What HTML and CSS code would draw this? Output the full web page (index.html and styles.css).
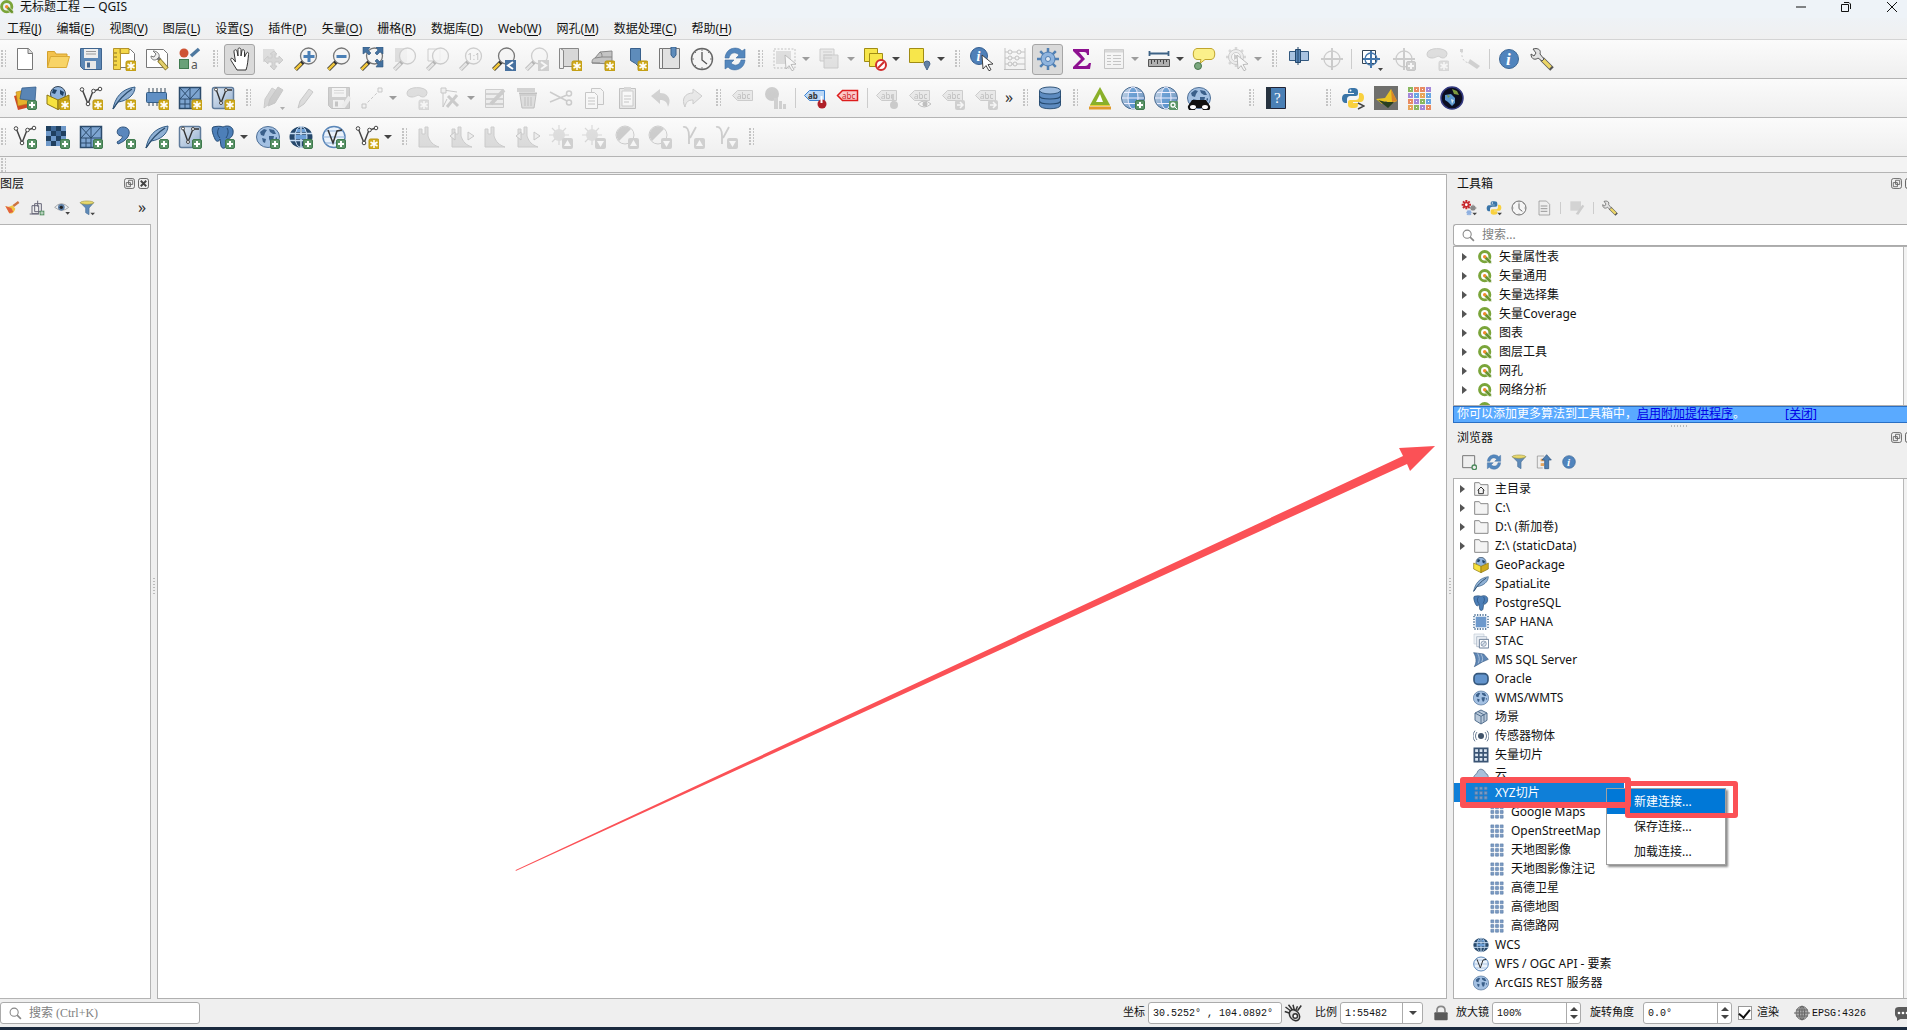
FILE: index.html
```html
<!DOCTYPE html>
<html lang="zh-CN">
<head>
<meta charset="utf-8">
<title>无标题工程 — QGIS</title>
<link rel="stylesheet" href="styles.css">
</head>
<body>
<svg class="defs" aria-hidden="true">
<defs>
<linearGradient id="gb" x1="0" y1="0" x2="1" y2="1"><stop offset="0" stop-color="#cfdded"/><stop offset="1" stop-color="#4f81b5"/></linearGradient>
<linearGradient id="gv" x1="0" y1="0" x2="1" y2="1"><stop offset="0" stop-color="#e6edf5"/><stop offset="1" stop-color="#8facce"/></linearGradient>
<g id="plus"><rect x="14.500" y="14.500" width="9" height="9" rx="1.500" fill="#5b9468" stroke="#3f7a4d"/><path d="M19 16v6M16 19h6" stroke="#fff" stroke-width="2"/></g>
<g id="star"><rect x="14" y="14" width="10" height="10" rx="1.500" fill="#d0ab1d" stroke="#b8940c"/><path d="M19 15v8M15.500 17l7 4M22.500 17l-7 4" stroke="#fff" stroke-width="1.500"/></g>
<g id="q"><circle cx="11.500" cy="11.500" r="8.800" fill="none" stroke="#7aa53a" stroke-width="5"/><path d="M11 11l4 0 8 8v4h-4l-8-8z" fill="#6a952f" stroke="#fff"/><circle cx="11.500" cy="11.500" r="3" fill="#f08a2c"/></g>
<g id="new"><path d="M4.500 1.500h11l4 4.500v16.500h-15z" fill="#fff" stroke="#777"/><path d="M15 1.500v5h4.500" fill="#ddd" stroke="#777"/></g>
<g id="open"><path d="M1.500 20.500v-16h7l1.500 2.500h11v4" fill="#f3c24d" stroke="#d3a02c"/><path d="M1.500 20.500l3-11h19l-3 11z" fill="#f8d467" stroke="#d9a935"/></g>
<g id="save"><path d="M1.500 1.500h21v21h-18l-3-3z" fill="#5d88b6" stroke="#3f648e"/><rect x="5" y="2" width="14" height="9" fill="#eee"/><path d="M7 4.500h10M7 7h10" stroke="#999"/><rect x="6" y="14" width="11" height="8" fill="#e8e8e8"/><rect x="8" y="15.500" width="3" height="5" fill="#46688f"/></g>
<g id="layout"><path d="M3.500 2.500h15l4 4v14h-19z" fill="#fff" stroke="#777"/><path d="M1.500 1.500h7v21h-7zM8 1.500h9v5h-9z" fill="#f4d748" stroke="#b4932a"/><path d="M2 6h3M2 10h3M2 14h3M2 18h3" stroke="#8a701f"/></g>
<g id="manager"><path d="M1.500 2.500h17l4 4v14h-21z" fill="#fff" stroke="#777"/><path d="M11 9l4 4" stroke="#777" stroke-width="3.500"/><path d="M8 4l3 3-2 3-3-1c0 4 4 5 6 3l2-2c1-3-2-6-6-6z" fill="#eee" stroke="#777"/><path d="M14 13l8 9" stroke="#857326" stroke-width="4.500"/><path d="M14.500 13.500l7 8" stroke="#e4d06c" stroke-width="2.800"/></g>
<g id="style"><circle cx="6" cy="6" r="4.500" fill="#ce5334"/><path d="M13 9l8-7" stroke="#4e789f" stroke-width="3.500"/><rect x="1.500" y="12.500" width="9" height="9" fill="#69a179" stroke="#3f7a50"/><text x="13" y="22" font-size="12" fill="#555" font-family="Noto Sans">a</text></g>
<g id="hand"><path d="M9 23l-5-8c-3-4 0-5 2-2l1.500 2L6 5c-.3-2.500 2.200-3 3-1l1 5V2.500c0-2 2.500-2 3 0V9l1-5.500c.5-1.500 2.500-1 2.500 1L16.500 10l2-4c1-1.500 2.500-.5 2 1.500-.5 6-1 11-2.500 15.500z" fill="#fff" stroke="#333"/></g>
<g id="panmap"><path d="M2 2h11l3 6-4 7H2z" fill="#aaa"/><path d="M13 4l3 3h-2v4h4V9l4 4-4 4v-2h-4v4h2l-3 4-4-4h2v-4H7v2l-4-4 4-4v2h4V7H9z" fill="#999" stroke="#777"/></g>
<g id="mag"><path d="M1.500 22.500l8-8" stroke="#333" stroke-width="4"/><path d="M1.500 22.500l6-6" stroke="#f0c63c" stroke-width="2.500"/><circle cx="14.500" cy="9" r="8" fill="#f4f4f4" fill-opacity=".8" stroke="#777" stroke-width="1.300"/></g>
<g id="zin"><use href="#mag"/><path d="M15 4v11M9.500 9.500h11" stroke="#4a7fb5" stroke-width="3"/></g>
<g id="zout"><use href="#mag"/><path d="M9.500 9.500h10" stroke="#4a7fb5" stroke-width="3"/></g>
<g id="zfull"><use href="#mag"/><path d="M3 0h7L8 3l3 3-2 2-3-3-3 2zM23 0h-7l2 3-3 3 2 2 3-3 3 2zM23 20h-7l2-3-3-3 2-2 3 3 3-2z" fill="#44719f" stroke="#2f557c" stroke-width=".6"/></g>
<g id="zsel"><path d="M2 1h12v14H2z" fill="#aaa"/><use href="#mag"/></g>
<g id="zlay"><path d="M2 2h12v12H2z" fill="none" stroke="#777"/><use href="#mag"/></g>
<g id="znat"><use href="#mag"/><text x="8.500" y="13" font-size="9" fill="#444" font-family="Noto Sans">1:1</text></g>
<g id="zlast"><use href="#mag"/><rect x="13" y="13" width="11" height="11" fill="#47719f"/><path d="M21 15l-5 3.500 5 3.500" fill="none" stroke="#fff" stroke-width="2"/></g>
<g id="znext"><use href="#mag"/><rect x="13" y="13" width="11" height="11" fill="#888"/><path d="M16 15l5 3.500-5 3.500" fill="none" stroke="#fff" stroke-width="2"/></g>
<g id="mapv"><path d="M2.500 1.500h18v18h-18z" fill="#d8d8d8" stroke="#888"/><path d="M2.500 1.500h-1v20h4v-18z" fill="#eee" stroke="#888"/></g>
<g id="map3d"><path d="M1 16c0-4 1-4 3-5l5-6 12-1v13z" fill="#c4c4c4" stroke="#888"/><path d="M4 11l7-1M9 5c2 1 2 3 2 5h10M1 16h8" fill="none" stroke="#888"/></g>
<g id="bkm"><path d="M6.500 1.500h10v20l-5-5-5-3z" fill="#5e8cbb" stroke="#38608c"/></g>
<g id="bkms"><path d="M5.500 1.500h17v20h-17z" fill="#e1e1e1" stroke="#777"/><path d="M2.500 1.500h3v20h-3z" fill="#f2f2f2" stroke="#777"/><path d="M14 0h5v8l-2.500 3-2.500-3z" fill="#5e8cbb" stroke="#38608c"/></g>
<g id="clock"><circle cx="12" cy="12" r="10.500" fill="#f5f5f5" stroke="#666" stroke-width="1.400"/><path d="M12 5v8l5 4" fill="none" stroke="#555" stroke-width="1.300"/><path d="M12 2v2M12 20v2M2 12h2M20 12h2M5 5l1 1M19 5l-1 1M5 19l1-1" stroke="#777"/></g>
<g id="refresh"><path d="M2 11C3 0 15-1 19 4l3-2v9h-9l3-3c-4-4-9-2-10 3z" fill="#5487bd" stroke="#3e6d9f" stroke-width=".6"/><path d="M22 13c-1 11-13 12-17 7l-3 2v-9h9l-3 3c4 4 9 2 10-3z" fill="#5487bd" stroke="#3e6d9f" stroke-width=".6"/></g>
<g id="cursor"><path d="M12 8l11 9-5 .6 3 5-2 1.200-3-5.200-3 3.400z" fill="#fff" stroke="#333" stroke-width=".9"/></g>
<g id="selrect"><rect x="1" y="2" width="21" height="19" fill="none" stroke="#555" stroke-dasharray="2 1.500"/><path d="M3 4h15v13H3z" fill="#aaa"/><use href="#cursor"/></g>
<g id="form"><path d="M2 2h14v12H2z" fill="#ccc" stroke="#777"/><path d="M6 8h14v13H6z" fill="#bbb" stroke="#777"/><path d="M5 5h9M5 8h9M5 11h9" stroke="#777"/></g>
<g id="desel"><path d="M1.500 1.500h13v13h-13z" fill="#f7e64b" stroke="#a08c14"/><path d="M6.500 6.500h13v13h-13z" fill="#f7e64b" stroke="#a08c14"/><circle cx="18" cy="18" r="5" fill="#fff" stroke="#d02e2e" stroke-width="2"/><path d="M15 21l6-6" stroke="#d02e2e" stroke-width="2"/></g>
<g id="selloc"><path d="M1.500 1.500h14v14h-14z" fill="#f7e64b" stroke="#a08c14"/><path d="M19 23l-3-6a3 3 0 1 1 6 0z" fill="#6482a5" stroke="#48648a"/></g>
<g id="ident"><circle cx="9" cy="9" r="8.500" fill="#4f80b8" stroke="#365f91"/><text x="6.500" y="14" font-size="14" font-weight="bold" font-style="italic" fill="#fff" font-family="Liberation Serif">i</text><use href="#cursor"/></g>
<g id="abacus"><path d="M2 1v21M22 1v21M1 22.500h22M2 5h20M2 11h20M2 17h20" stroke="#555" fill="none"/><path d="M7 5m-2 0a2 2 0 1 0 4 0 2 2 0 1 0-4 0M14 5a2 2 0 1 0 4 0 2 2 0 1 0-4 0M5 11a2 2 0 1 0 4 0 2 2 0 1 0-4 0M12 11a2 2 0 1 0 4 0 2 2 0 1 0-4 0M5 17a2 2 0 1 0 4 0 2 2 0 1 0-4 0M10 17a2 2 0 1 0 4 0 2 2 0 1 0-4 0" fill="#eee" stroke="#555"/></g>
<g id="gear"><path d="M12 1v22M1 12h22M4.200 4.200l15.600 15.600M19.800 4.200L4.200 19.800" stroke="#5180b3" stroke-width="2.500"/><circle cx="12" cy="12" r="7" fill="#8fb4de" stroke="#4d7cb2"/><circle cx="12" cy="12" r="2.500" fill="#dfe8f2" stroke="#4d7cb2"/></g>
<g id="sigma"><path d="M4 2h16v6h-2c0-2-1-3-3-3H10l6 7-7 7h7c2 0 3-1 4-3h2l-1 6H4v-2l8-8-8-8z" fill="#8d1190"/></g>
<g id="table"><path d="M2.500 2.500h19v19h-19z" fill="#f4f4f4" stroke="#666"/><path d="M3 4h18" stroke="#999" stroke-width="3"/><path d="M5 8.500h4M11 8.500h8M5 11.500h4M11 11.500h8M5 14.500h4M11 14.500h8M5 17.500h4M11 17.500h8" stroke="#666"/></g>
<g id="ruler"><path d="M2 6.500h20M2.500 4v5M21.500 4v5" stroke="#3d6285" stroke-width="1.800"/><path d="M1.500 12.500h21v7h-21z" fill="#b0b0b0" stroke="#555"/><path d="M4.500 13v4M7.500 13v2M10.500 13v4M13.500 13v2M16.500 13v4M19.500 13v2" stroke="#444"/></g>
<g id="bubble"><path d="M5 1.500h14c5 0 5 11 0 11h-6l-5 4 1-4H5c-5 0-5-11 0-11z" fill="#fbf08a" stroke="#c0a52d"/><circle cx="6" cy="19" r="3.500" fill="#7ba77e" stroke="#47754b"/></g>
<g id="gearcur"><path d="M11 0v20M1 10h20M4 3l14 14M18 3L4 17" stroke="#999" stroke-width="2.500"/><circle cx="11" cy="10" r="7.500" fill="#ddd" stroke="#777"/><circle cx="11" cy="10" r="4.500" fill="#fff" stroke="#777"/><path d="M9 7l5 3-5 3z" fill="#777"/><use href="#cursor"/></g>
<g id="snap"><path d="M2.500 4.500h19v9h-19z" fill="#a9c3e1" stroke="#32587f"/><path d="M8.500 2.500h5v13h-5z" fill="#5784b5" stroke="#24486d"/><path d="M11 0v18" stroke="#24486d"/></g>
<g id="cross"><circle cx="12" cy="12" r="8" fill="none" stroke="#777" stroke-width="1.300"/><path d="M12 1v22M1 12h22" stroke="#777" stroke-width="2"/></g>
<g id="digit"><path d="M3.500 3.500h13v13h-13z" fill="#fff" stroke="#345"/><circle cx="12" cy="12" r="6" fill="none" stroke="#4477ac" stroke-width="1.300"/><path d="M12 4v17M4 12h17" stroke="#4477ac" stroke-width="2"/><path d="M19 21h5l-2.500 3z" fill="#444"/></g>
<g id="blob"><path d="M2 7c0-7 19-7 20-1 0 5-4 6-7 4-2-2-4 1-8 1-3 0-5-1-5-4z" fill="#aaa" stroke="#777"/></g>
<g id="tracer"><path d="M4 4c-1 9 3 12 9 12" fill="none" stroke="#777" stroke-dasharray="2 2"/><path d="M12 12l10 7-3 3-9-6z" fill="#888"/><rect x="2" y="2" width="3" height="3" fill="#888"/></g>
<g id="info"><circle cx="12" cy="12" r="9.500" fill="#5084bd" stroke="#3d6795"/><text x="9" y="18" font-size="17" font-weight="bold" font-style="italic" fill="#fff" font-family="Liberation Serif">i</text></g>
<g id="wrench"><path d="M12 12l10 10" stroke="#555" stroke-width="5"/><path d="M12.500 12.500l8 8" stroke="#ecd566" stroke-width="3.500"/><path d="M6 1.500l-3 .500 3 4-2 3-3-2c0 6 5 6 7 4l4 3 2-2-4-5c1-4-1-5-4-5.500z" fill="#e3e3e3" stroke="#555"/></g>
<g id="dsm"><path d="M1 10l14-4 2 15-12 3z" fill="#cf4a25"/><path d="M3 6l14-3 1 14-13 3z" fill="#e8b22b" stroke="#b9811a" stroke-width=".6"/><path d="M9 2l14-1-1 14-15-2z" fill="#5985b5" stroke="#325d8b" stroke-width=".8"/></g>
<g id="pkg"><circle cx="12" cy="8" r="7.500" fill="#8fb3dc" stroke="#345"/><path d="M7 3l4 1-2 4-3-1zM14 4l4 2-1 4-3-2z" fill="#1f4266"/><path d="M1 9l11 5v9.500L1 18z" fill="#f7e23e" stroke="#8a7412"/><path d="M23 9l-11 5v9.500l11-5.500z" fill="#d0ab1d" stroke="#8a7412"/></g>
<g id="vec"><path d="M3 3l6 15 5-13 7-2" fill="none" stroke="#444" stroke-width="1.500"/><g fill="#fff" stroke="#444"><circle cx="3" cy="3.500" r="1.800"/><circle cx="14.500" cy="5" r="1.800"/><circle cx="21" cy="3" r="1.800"/><circle cx="9" cy="18" r="1.800"/></g></g>
<g id="feather"><path d="M1 23C3 12 9 3 23 1c0 8-8 14-17 15z" fill="#8fb0d4" stroke="#345d86"/><path d="M1 23C6 15 12 8 20 3" fill="none" stroke="#2b4c6d" stroke-width="1.400"/></g>
<g id="chip"><path d="M4 2v18M8 2v18M12 2v18M16 2v18M20 2v18" stroke="#345"/><rect x="1.500" y="6.500" width="20" height="10" rx="1" fill="#608fc4" stroke="#345d86"/></g>
<g id="mesh"><path d="M1.500 1.500h21v21h-21z" fill="#7da4d0" stroke="#2c4b6c" stroke-width="1.500"/><path d="M2 13h20M12 2v20M2 2l10 11L22 2M2 13L12 2M2 18h10M7 13v9" fill="none" stroke="#2c4b6c"/></g>
<g id="vtile"><rect x="1.500" y="1.500" width="21" height="21" rx="2" fill="url(#gv)" stroke="#5f7b9b" stroke-width="1.500"/><path d="M5 3l5 14 5-13h6" fill="none" stroke="#333" stroke-width="1.400"/><g fill="#fff" stroke="#444"><circle cx="5" cy="3.500" r="1.500"/><circle cx="15" cy="4" r="1.500"/><circle cx="10" cy="17" r="1.500"/></g></g>
<g id="pens"><path d="M3 22l1-9L11 2l5 3-7 12z" fill="#999" stroke="#777"/><path d="M7 20l2-7L17 1l5 3-8 13z" fill="#777" stroke="#666"/><path d="M19 21h5l-2.500 3z" fill="#222"/></g>
<g id="pen"><path d="M4 22l2-7L15 3l4 3-9 12z" fill="#aaa" stroke="#666"/></g>
<g id="saveE"><use href="#save"/><path d="M16 21l7-10" stroke="#ddd" stroke-width="4"/></g>
<g id="line"><path d="M4 20L20 4" stroke="#666" stroke-dasharray="3 2"/><path d="M2 18h4v4H2zM18 2h4v4h-4z" fill="#eee" stroke="#666"/></g>
<g id="vertex"><path d="M5 5v16l4-8M5 4l14 2" fill="none" stroke="#666"/><path d="M3 2h5v5H3z" fill="#ddd" stroke="#666"/><path d="M10 10l10 10M19 9L9 21" stroke="#777" stroke-width="3"/></g>
<g id="mod"><path d="M2.500 3.500h18v18h-18z" fill="#ddd" stroke="#777"/><path d="M3 8h17M3 13h17M3 18h17" stroke="#888" stroke-width="2"/><path d="M8 18L21 4" stroke="#777" stroke-width="4"/></g>
<g id="trash"><path d="M1 2h18v4H1z" fill="#888"/><path d="M4 9h16l-2 13H6z" fill="#d4a8a8" stroke="#555"/><path d="M3 7.500h18" stroke="#555" stroke-width="2"/><path d="M9 11v9M12 11v9M15 11v9" stroke="#555"/></g>
<g id="cut"><path d="M1 6l17 9M1 16l17-7" stroke="#777" stroke-width="1.500"/><circle cx="20" cy="7.500" r="2.500" fill="none" stroke="#777" stroke-width="1.500"/><circle cx="20" cy="16.500" r="2.500" fill="none" stroke="#777" stroke-width="1.500"/></g>
<g id="copy"><path d="M9.500 2.500h9l3 3v13h-12z" fill="#eee" stroke="#666"/><path d="M3.500 6.500h9l3 3v13h-12z" fill="#fff" stroke="#666"/><path d="M6 12h7M6 15h7M6 18h7" stroke="#666"/></g>
<g id="paste"><path d="M4.500 2.500h16v20h-16z" fill="#ccc" stroke="#555"/><path d="M7 5h11v15H7z" fill="#fff" stroke="#777"/><path d="M9 10h7M9 13h7M9 16h5" stroke="#666"/><path d="M9 1h7v4H9z" fill="#999"/></g>
<g id="undo"><path d="M3 10l9-7v4c8 0 12 6 8 14-1-5-3-7-8-7v4z" fill="#888"/></g>
<g id="redo"><path d="M21 10l-9-7v4C4 7 0 13 4 21c1-5 3-7 8-7v4z" fill="#ccc" stroke="#777"/></g>
<g id="tag"><path d="M1.500 9.500l5-5h15v10h-15z" fill="#ccc" stroke="#777"/><text x="6" y="12.500" font-size="8" fill="#444" font-family="Noto Sans">abc</text></g>
<g id="diag"><circle cx="8" cy="8" r="7" fill="#777"/><path d="M10 12h4v11h-4zM15 15h3v8h-3zM19 18h3v5h-3z" fill="#888"/></g>
<g id="tagb"><path d="M1.500 9.500l5-5h15v10h-15z" fill="#bcd8f6" stroke="#3b83d3"/><text x="5" y="12.500" font-size="8" font-weight="bold" fill="#333" font-family="Noto Sans">ab</text><circle cx="19" cy="18" r="4.500" fill="#b02028"/><path d="M18.500 10v7" stroke="#fff" stroke-width="2"/></g>
<g id="tagr"><path d="M1.500 9.500l5-5h15v10h-15z" fill="#fbc9c9" stroke="#dd1c1c" stroke-width="1.500"/><text x="6" y="12.500" font-size="8" fill="#c22" font-family="Noto Sans">abc</text></g>
<g id="bsq"><rect x="14" y="14" width="10" height="10" rx="2" fill="#888"/><path d="M16 19h5M19 16l3 3-3 3" fill="none" stroke="#fff" stroke-width="1.500"/></g>
<g id="bup"><rect x="13" y="13" width="11" height="11" rx="2" fill="#888"/><path d="M15 21l3.500-6 3.500 6z" fill="#fff"/></g>
<g id="bdn"><rect x="13" y="13" width="11" height="11" rx="2" fill="#888"/><path d="M15 16l3.500 6 3.500-6z" fill="#fff"/></g>
<g id="pin"><circle cx="19" cy="19" r="4" fill="#777"/><path d="M18 8v9" stroke="#777" stroke-width="2"/></g>
<g id="eye"><path d="M10 18q6-6 13 0-7 6-13 0z" fill="#fff" stroke="#555"/><circle cx="17" cy="18" r="2.500" fill="#555"/></g>
<g id="db"><path d="M1.500 5v14c0 5 21 5 21 0V5z" fill="#5d8bc0" stroke="#2f5378"/><ellipse cx="12" cy="4.500" rx="10.500" ry="3.500" fill="#9dbce0" stroke="#2f5378"/><path d="M1.500 10c0 4 21 4 21 0M1.500 15c0 4 21 4 21 0" fill="none" stroke="#24486d" stroke-width="1.200"/></g>
<g id="tri"><path d="M12 1l10 18H2z" fill="#8ab02a"/><path d="M12 8l3 8H8z" fill="#fff"/><path d="M1 22h22" stroke="#e09a2b" stroke-width="3"/><path d="M2 19.500h20" stroke="#e8cf3a"/></g>
<g id="globe"><ellipse cx="12" cy="12" rx="11.500" ry="11" fill="url(#gb)" stroke="#4a6b90"/><ellipse cx="12" cy="12" rx="5" ry="11" fill="#4f8fd0" fill-opacity=".6" stroke="#eef"/><path d="M1 12h22M3 6.500h18M3 17.500h18" fill="none" stroke="#eef" stroke-width="1.200"/></g>
<g id="earth"><ellipse cx="12" cy="12" rx="11.500" ry="10.500" fill="#a3c0e2" stroke="#4f7097"/><path d="M4 7l4-3 3 1-2 3-1 3-3-1zM13 4l5 1 2 4-3 0-3-2zM6 13l4 1-1 4-2-1zM13 11l5 0-1 5-2 2-2-4zM19 13l2-1v3z" fill="#3a5f8a"/></g>
<g id="dglobe"><ellipse cx="12" cy="12" rx="11.500" ry="10.500" fill="#26486b"/><path d="M1 8.500h22M1 15.500h22M12 1v22" stroke="#c7dcf3" stroke-width="1.500"/><path d="M6 10h12v4H6zM7 4h4v3H7zM13 4h4v3h-4z" fill="#6da0d8"/><ellipse cx="12" cy="12" rx="6" ry="10.500" fill="none" stroke="#c7dcf3"/></g>
<g id="wfs"><ellipse cx="12" cy="12" rx="11" ry="10.500" fill="#eaf2fb" stroke="#5a86b8" stroke-width="1.500"/><path d="M1 12h22M3 6h18M3 18h18" stroke="#8fb0d8"/><path d="M6 5l5 13 4-12 5-1" fill="none" stroke="#333" stroke-width="1.500"/></g>
<g id="bino"><path d="M5 14h14l4 6a4 4 0 0 1-8 2h-6a4 4 0 0 1-8-2z" fill="#111"/><ellipse cx="6" cy="21" rx="3" ry="2" fill="#fff"/><ellipse cx="18" cy="21" rx="3" ry="2" fill="#fff"/></g>
<g id="gsearch"><rect x="15" y="15" width="9" height="9" rx="1" fill="#5b9468"/><circle cx="19" cy="19" r="2" fill="none" stroke="#fff" stroke-width="1.300"/><path d="M20 20l3 3" stroke="#fff"/></g>
<g id="help"><path d="M2.500 1.500h19v21h-19z" fill="#4a7fb5" stroke="#223"/><path d="M2 1h5v22H2z" fill="#26323f"/><text x="10" y="17" font-size="15" fill="#fff" font-family="Liberation Serif">?</text></g>
<g id="py"><path d="M12 2c-5 0-5 1-5 5h6v1H4c-4 0-4 9 0 9h2v-3c0-3 1-4 4-4h4c3 0 3-1 3-4 0-3-1-4-5-4z" fill="#3a75a8"/><path d="M12 22c5 0 5-1 5-5h-5v-1h8c4 0 4-9 0-9h-2v3c0 3-1 4-4 4h-4c-3 0-3 1-3 4 0 3 1 4 5 4z" fill="#f9d13e"/><circle cx="9.500" cy="4.500" r="1" fill="#fff"/></g>
<g id="pyc"><use href="#py"/><path d="M17 17l6 3-6 3" fill="none" stroke="#444" stroke-width="1.500"/></g>
<g id="terrain"><path d="M0 0h24v24H0z" fill="#6f6f6c"/><path d="M2 13l9-1 6-9 6 12-7 3-4-3-4 3z" fill="#e9c423"/><path d="M17 3l6 12-5 1z" fill="#d9852a"/><path d="M4 14l8 2 8 0-6 6z" fill="#284020"/></g>
<g id="tiles" fill="#fff" stroke-width="2"><path stroke="#8ab860" d="M2 2h3v3H2zM14 14h3v3h-3zM8 20h3v3H8z"/><path stroke="#e88b62" d="M8 2h3v3H8zM2 14h3v3H2zM14 2h3v3h-3zM20 20h3v3h-3z"/><path stroke="#a487d8" d="M20 2h3v3h-3zM2 8h3v3H2zM8 14h3v3H8zM14 20h3v3h-3z"/><path stroke="#6aa6e2" d="M8 8h3v3H8zM20 8h3v3h-3zM20 14h3v3h-3z"/><path stroke="#e8a55a" d="M14 8h3v3h-3zM2 20h3v3H2z"/></g>
<g id="space"><circle cx="12" cy="12" r="11" fill="#0b0d20" stroke="#343a80" stroke-width="1.500"/><path d="M5 9l6-1 4 4 0 5-3 3-4-4-3-2z" fill="#5b97cf"/><path d="M12 3l5 2 2 4-5-1zM7 9l3 1-2 2z" fill="#7c9a3e"/><path d="M11 13l3 1-2 4z" fill="#d6e4ee"/></g>
<g id="raster"><path d="M0 1h20v20H0z" fill="#6e98c8"/><path d="M0 1h5v5H0zM10 1h5v5h-5zM5 6h5v5H5zM15 6h5v5h-5zM0 11h5v5H0zM10 11h5v5h-5zM5 16h5v5H5z" fill="#20405f"/><path d="M10 6h5v5h-5zM5 1h5v5H5z" fill="#3f6896"/></g>
<g id="comma"><path d="M11 2c9 0 9 12-5 17l-1-2c5-3 6-5 5-6-7 0-6-9 1-9z" fill="#5a87bd" stroke="#2d527b"/></g>
<g id="pg"><path d="M2 2c4-1 8-1 10 0 4-2 9-1 10 3 1 6-3 9-6 9l-1 7c-1 3-4 3-5 0l-1-7c-1 3-4 3-5 0C2 10 0 4 2 2z" fill="#4d7fb8" stroke="#254b74"/><path d="M8 3c-2 3-2 7 1 10M16 3c2 3 1 7-1 10" fill="none" stroke="#254b74"/></g>
<g id="hist"><path d="M2 22V4h3v5h3V2h3v9c2 6 5 9 11 11z" fill="#aaa" stroke="#777"/></g>
<g id="histw"><use href="#hist"/><path d="M0 11l5-4v8zM24 11l-6-4v8z" fill="#ddd" stroke="#666"/></g>
<g id="sun"><path d="M10 0v20M0 10h20M3 3l14 14M17 3L3 17" stroke="#999" stroke-width="1.200"/><circle cx="10" cy="10" r="6" fill="#aaa"/></g>
<g id="contr"><circle cx="10" cy="10" r="9" fill="#eee" stroke="#777"/><path d="M4 16A8 8 0 0 1 16 4z" fill="#777"/></g>
<g id="gam"><path d="M2 2c4-1 6 3 6 9v8M15 2L9 13" fill="none" stroke="#777" stroke-width="1.800"/></g>
<g id="brush"><path d="M2 9c5 3 7 0 11-1l4 5c-2 7-6 8-9 7z" fill="#f0c642"/><path d="M2 9l9 3 3 6-6 2z" fill="#e2623f"/><path d="M14 9l8-6" stroke="#ce7440" stroke-width="3.500"/></g>
<g id="group"><path d="M8.500 5.500h10v12h-10zM4.500 8.500h10v12h-10z" fill="none" stroke="#667" stroke-width="1.500"/><path d="M1 21h14M13 1v9" stroke="#667" stroke-width="1.500"/><path d="M16 16h7v7h-7z" fill="#5b9468"/><path d="M19.500 17v5M17 19.500h5" stroke="#fff"/></g>
<g id="eye2"><path d="M1 11q10-11 21 0-10 9-21 0z" fill="#e8edf2" stroke="#888"/><circle cx="11" cy="11" r="5" fill="#5d7ea5"/><circle cx="11" cy="11" r="2.500" fill="#222"/><path d="M17 18h7l-3.500 4z" fill="#444"/></g>
<g id="funnel"><path d="M2 4h20l-7 8v10l-5-3v-7z" fill="#5f8bb9" stroke="#4a6f98"/><ellipse cx="12" cy="4" rx="10" ry="2.500" fill="#e9d96b" stroke="#a59a45"/></g>
<g id="caret"><path d="M17 19h7l-3.500 4z" fill="#444"/></g>
<g id="cogs"><path d="M8 0v14M1 7h14M3 2l10 10M13 2L3 12" stroke="#c7272c" stroke-width="3"/><circle cx="8" cy="7" r="2" fill="#fff"/><path d="M18 7v9M13 12h10M15 9l6 6M21 9l-6 6" stroke="#888" stroke-width="2"/><path d="M12 15v8M8 19h8M9 16l6 6M15 16l-6 6" stroke="#8fb0e0" stroke-width="2"/></g>
<g id="doc"><path d="M4.500 1.500h11l5 5v16h-16z" fill="#eee" stroke="#888"/><path d="M7 9h10M7 13h10M7 17h10" stroke="#999" stroke-width="1.500"/></g>
<g id="edit"><path d="M2 2h16v14H2z" fill="#999"/><path d="M10 21l10-14 3 2-9 13z" fill="#888"/></g>
<g id="addl"><path d="M2.500 2.500h18v18h-18z" fill="none" stroke="#777" stroke-width="1.500"/><circle cx="20" cy="20" r="3.500" fill="#eee" stroke="#4d8a5d" stroke-width="2"/></g>
<g id="collapse"><path d="M2 3h10M2 3v18h8M8 9h5M8 15h5" fill="none" stroke="#888"/><path d="M7 7h5v4H7zM7 14h5v4H7z" fill="#e8a55a"/><path d="M16 1l7 8h-4v13h-6V9h-4z" fill="#4f7fb2" stroke="#2b507a"/></g>
<g id="folder"><path d="M2.500 21.500v-19h7l2 3h11v16z" fill="#f4f4f4" stroke="#8a8a8a" stroke-width="1.500"/></g>
<g id="home"><use href="#folder"/><path d="M7 14l5-5 5 5M8.500 13v6h7v-6" fill="none" stroke="#333" stroke-width="1.500"/></g>
<g id="hana"><path d="M4 4h16v16H4z" fill="#6d99cc"/><path d="M2 1.500h20M2 22.500h20M1.500 3v18M22.500 3v18" stroke="#345d86" stroke-width="2" stroke-dasharray="2 2"/></g>
<g id="stac"><path d="M1.500 1.500h15v15h-15z" fill="#eef2f7" stroke="#c3cbd6"/><path d="M5.500 5.500h15v15h-15z" fill="#eef2f7" stroke="#9aa9bb"/><path d="M9.500 9.500h14v13h-14z" fill="#fff" stroke="#6b7f98" stroke-width="1.500"/><circle cx="16" cy="16" r="4" fill="#dfe6ee" stroke="#6b7f98"/><path d="M13 19l6-6" stroke="#6b7f98"/></g>
<g id="mssql"><path d="M1 1l15 2 7 8-9 4L2 22c4-7 3-14-1-21z" fill="#5f87b5" stroke="#3d5f88"/><path d="M7 2c3 6 3 10 1 15M12 3c3 5 3 8 1 12" fill="none" stroke="#c8d8ea"/></g>
<g id="oracle"><rect x="1.500" y="4" width="21" height="16" rx="6" fill="#6394cc" stroke="#36587d" stroke-width="2.500"/></g>
<g id="cube"><path d="M12 1.500l9 4.500v11l-9 5.500-9-5.500V6z" fill="#b9c9da" stroke="#54708f" stroke-width="1.500"/><path d="M3 6l9 5 9-5M12 11v11M7.500 3.800l9 5v10" fill="none" stroke="#54708f" stroke-width="1.500"/></g>
<g id="sensor"><circle cx="12" cy="12" r="4.500" fill="#40536a"/><path d="M6 6a9 9 0 0 0 0 12M18 6a9 9 0 0 1 0 12M3 4a13 13 0 0 0 0 16M21 4a13 13 0 0 1 0 16" fill="none" stroke="#6a7d94" stroke-width="1.500"/></g>
<g id="vgrid"><path d="M2 2h20v20H2z" fill="#dbe6f2"/><path d="M2 2h20v20H2zM8.700 2v20M15.300 2v20M2 8.700h20M2 15.300h20" fill="none" stroke="#3a5474" stroke-width="2.500"/></g>
<g id="cloud"><path d="M1 17c2-5 4-5 5-6 1-5 5-8 9-5 3 1 3 4 4 5 3 1 4 4 4 7-7 3-16 2-22-1z" fill="#a9c0da" stroke="#68809c" stroke-width="1.500"/></g>
<g id="xyz" fill="#7c9cc4" stroke="#587aa5"><path d="M1.500 1.500h5v5h-5zM9.500 1.500h5v5h-5zM17.500 1.500h5v5h-5zM1.500 9.500h5v5h-5zM9.500 9.500h5v5h-5zM17.500 9.500h5v5h-5zM1.500 17.500h5v5h-5zM9.500 17.500h5v5h-5zM17.500 17.500h5v5h-5z"/></g>
<g id="search"><circle cx="9.500" cy="9.500" r="7.500" fill="none" stroke="#888" stroke-width="2"/><path d="M15 15l7 7" stroke="#888" stroke-width="3"/></g>
<g id="lock"><path d="M6 11V8c0-8 12-8 12 0v3" fill="none" stroke="#888" stroke-width="2.500"/><rect x="2" y="11" width="20" height="12" rx="1.500" fill="#5a5a5a"/></g>
<g id="mouse"><path d="M2 4l8 6M6 1l6 8M12 1l2 8M18 3l-3 7M23 2l-5 7M1 10l9 3" stroke="#333" stroke-width="2"/><ellipse cx="14" cy="15" rx="6" ry="8" transform="rotate(-40 14 15)" fill="#ddd" stroke="#333" stroke-width="2"/><circle cx="15" cy="16" r="3" fill="#fff" stroke="#333" stroke-width="2"/></g>
<g id="crs"><ellipse cx="12" cy="12" rx="9" ry="10" fill="#aaa" stroke="#777" stroke-width="1.500"/><ellipse cx="12" cy="12" rx="4" ry="10" fill="none" stroke="#666" stroke-width="1.500"/><path d="M0 12h24M12 1v22M3 7.500h18M3 16.500h18" stroke="#666" stroke-width="1.500"/></g>
<g id="msg"><path d="M6 3h14q4 0 4 5v8q0 5-4 5H8l-5 3v-5q-3-1-3-5V8q0-5 6-5z" fill="#5c5c5c"/><circle cx="6" cy="12" r="2" fill="#fff"/><circle cx="12" cy="12" r="2" fill="#fff"/><circle cx="18" cy="12" r="2" fill="#fff"/></g>
<g id="float"><rect x="1" y="1" width="22" height="22" rx="5" fill="none" stroke="#666" stroke-width="2"/><path d="M10 5h9v9h-9zM5 10h9v9H5z" fill="#efefef" stroke="#666" stroke-width="2"/></g>
<g id="shut"><rect x="1" y="1" width="22" height="22" rx="5" fill="none" stroke="#555" stroke-width="2"/><path d="M6 6l12 12M18 6L6 18" stroke="#444" stroke-width="4"/></g>
</defs>
</svg>

<div class="app">
<header class="titlebar">
  <svg class="i14" viewBox="0 0 24 24"><use href="#q"/></svg>
  <h1>无标题工程 — QGIS</h1>
  <button aria-label="最小化"><svg viewBox="0 0 12 12"><path d="M1 6h10" stroke="#111"/></svg></button>
  <button aria-label="还原"><svg viewBox="0 0 12 12"><path d="M1.500 3.500h7v7h-7zM4 1.500h5l1.500 1.500v5" fill="none" stroke="#111"/></svg></button>
  <button aria-label="关闭"><svg viewBox="0 0 12 12"><path d="M1 1l10 10M11 1L1 11" stroke="#111"/></svg></button>
</header>
<nav class="menubar">
  <button>工程(<u>J</u>)</button><button>编辑(<u>E</u>)</button><button>视图(<u>V</u>)</button><button>图层(<u>L</u>)</button><button>设置(<u>S</u>)</button><button>插件(<u>P</u>)</button><button>矢量(<u>O</u>)</button><button>栅格(<u>R</u>)</button><button>数据库(<u>D</u>)</button><button>Web(<u>W</u>)</button><button>网孔(<u>M</u>)</button><button>数据处理(<u>C</u>)</button><button>帮助(<u>H</u>)</button>
</nav>

<div class="toolbar" role="toolbar" aria-label="工程与地图">
  <i class="grip"></i>
  <button aria-label="新建工程"><svg viewBox="0 0 24 24"><use href="#new"/></svg></button>
  <button aria-label="打开工程"><svg viewBox="0 0 24 24"><use href="#open"/></svg></button>
  <button aria-label="保存工程"><svg viewBox="0 0 24 24"><use href="#save"/></svg></button>
  <button aria-label="新建布局"><svg viewBox="0 0 24 24"><use href="#layout"/><use href="#star"/></svg></button>
  <button aria-label="布局管理器"><svg viewBox="0 0 24 24"><use href="#manager"/></svg></button>
  <button aria-label="样式管理器"><svg viewBox="0 0 24 24"><use href="#style"/></svg></button>
  <i class="grip"></i>
  <button class="on" aria-label="平移地图"><svg viewBox="0 0 24 24"><use href="#hand"/></svg></button>
  <button disabled aria-label="平移到选择"><svg viewBox="0 0 24 24"><use href="#panmap"/></svg></button>
  <button aria-label="放大"><svg viewBox="0 0 24 24"><use href="#zin"/></svg></button>
  <button aria-label="缩小"><svg viewBox="0 0 24 24"><use href="#zout"/></svg></button>
  <button aria-label="全图"><svg viewBox="0 0 24 24"><use href="#zfull"/></svg></button>
  <button disabled aria-label="缩放到选择"><svg viewBox="0 0 24 24"><use href="#zsel"/></svg></button>
  <button disabled aria-label="缩放到图层"><svg viewBox="0 0 24 24"><use href="#zlay"/></svg></button>
  <button disabled aria-label="原始分辨率"><svg viewBox="0 0 24 24"><use href="#znat"/></svg></button>
  <button aria-label="上一视图"><svg viewBox="0 0 24 24"><use href="#zlast"/></svg></button>
  <button disabled aria-label="下一视图"><svg viewBox="0 0 24 24"><use href="#znext"/></svg></button>
  <button aria-label="新建地图视图"><svg viewBox="0 0 24 24"><use href="#mapv"/><use href="#star"/></svg></button>
  <button aria-label="新建三维视图"><svg viewBox="0 0 24 24"><use href="#map3d"/><use href="#star"/></svg></button>
  <button aria-label="新建书签"><svg viewBox="0 0 24 24"><use href="#bkm"/><use href="#star"/></svg></button>
  <button aria-label="显示书签"><svg viewBox="0 0 24 24"><use href="#bkms"/></svg></button>
  <button aria-label="时态控制器"><svg viewBox="0 0 24 24"><use href="#clock"/></svg></button>
  <button aria-label="刷新"><svg viewBox="0 0 24 24"><use href="#refresh"/></svg></button>
  <i class="grip"></i>
  <button class="drop" disabled aria-label="选择要素"><svg viewBox="0 0 24 24"><use href="#selrect"/></svg></button>
  <button class="drop" disabled aria-label="按表单选择"><svg viewBox="0 0 24 24"><use href="#form"/></svg></button>
  <button class="drop" aria-label="取消选择"><svg viewBox="0 0 24 24"><use href="#desel"/></svg></button>
  <button class="drop" aria-label="按位置选择"><svg viewBox="0 0 24 24"><use href="#selloc"/></svg></button>
  <i class="grip"></i>
  <button aria-label="识别要素"><svg viewBox="0 0 24 24"><use href="#ident"/></svg></button>
  <button disabled aria-label="字段计算器"><svg viewBox="0 0 24 24"><use href="#abacus"/></svg></button>
  <button class="on" aria-label="工具箱"><svg viewBox="0 0 24 24"><use href="#gear"/></svg></button>
  <button aria-label="统计汇总"><svg viewBox="0 0 24 24"><use href="#sigma"/></svg></button>
  <button class="drop" disabled aria-label="属性表"><svg viewBox="0 0 24 24"><use href="#table"/></svg></button>
  <button class="drop" aria-label="测量"><svg viewBox="0 0 24 24"><use href="#ruler"/></svg></button>
  <button aria-label="地图提示"><svg viewBox="0 0 24 24"><use href="#bubble"/></svg></button>
  <button class="drop" disabled aria-label="要素动作"><svg viewBox="0 0 24 24"><use href="#gearcur"/></svg></button>
  <i class="grip"></i>
  <button aria-label="捕捉"><svg viewBox="0 0 24 24"><use href="#snap"/></svg></button>
  <button disabled aria-label="高级数字化"><svg viewBox="0 0 24 24"><use href="#cross"/></svg></button>
  <i class="sep"></i>
  <button aria-label="数字化方式"><svg viewBox="0 0 24 24"><use href="#digit"/></svg></button>
  <button disabled aria-label="添加点"><svg viewBox="0 0 24 24"><use href="#cross"/><use href="#plus"/></svg></button>
  <button disabled aria-label="添加面"><svg viewBox="0 0 24 24"><use href="#blob"/><use href="#star"/></svg></button>
  <button disabled aria-label="追踪"><svg viewBox="0 0 24 24"><use href="#tracer"/></svg></button>
  <i class="sep"></i>
  <button aria-label="信息"><svg viewBox="0 0 24 24"><use href="#info"/></svg></button>
  <button aria-label="选项"><svg viewBox="0 0 24 24"><use href="#wrench"/></svg></button>
</div>

<div class="toolbar" role="toolbar" aria-label="数据源与数字化">
  <i class="grip"></i>
  <button aria-label="数据源管理器"><svg viewBox="0 0 24 24"><use href="#dsm"/><use href="#plus"/></svg></button>
  <button aria-label="新建 GeoPackage"><svg viewBox="0 0 24 24"><use href="#pkg"/><use href="#star"/></svg></button>
  <button aria-label="新建 Shapefile"><svg viewBox="0 0 24 24"><use href="#vec"/><use href="#star"/></svg></button>
  <button aria-label="新建 SpatiaLite"><svg viewBox="0 0 24 24"><use href="#feather"/><use href="#star"/></svg></button>
  <button aria-label="新建临时图层"><svg viewBox="0 0 24 24"><use href="#chip"/><use href="#star"/></svg></button>
  <button aria-label="新建网孔"><svg viewBox="0 0 24 24"><use href="#mesh"/><use href="#star"/></svg></button>
  <button aria-label="新建虚拟图层"><svg viewBox="0 0 24 24"><use href="#vtile"/><use href="#star"/></svg></button>
  <i class="grip"></i>
  <button disabled aria-label="当前编辑"><svg viewBox="0 0 24 24"><use href="#pens"/></svg></button>
  <button disabled aria-label="切换编辑"><svg viewBox="0 0 24 24"><use href="#pen"/></svg></button>
  <button disabled aria-label="保存编辑"><svg viewBox="0 0 24 24"><use href="#saveE"/></svg></button>
  <button class="drop" disabled aria-label="线段数字化"><svg viewBox="0 0 24 24"><use href="#line"/></svg></button>
  <button disabled aria-label="添加要素"><svg viewBox="0 0 24 24"><use href="#blob"/><use href="#star"/></svg></button>
  <button class="drop" disabled aria-label="顶点工具"><svg viewBox="0 0 24 24"><use href="#vertex"/></svg></button>
  <button disabled aria-label="修改属性"><svg viewBox="0 0 24 24"><use href="#mod"/></svg></button>
  <button disabled aria-label="删除"><svg viewBox="0 0 24 24"><use href="#trash"/></svg></button>
  <button disabled aria-label="剪切"><svg viewBox="0 0 24 24"><use href="#cut"/></svg></button>
  <button disabled aria-label="复制"><svg viewBox="0 0 24 24"><use href="#copy"/></svg></button>
  <button disabled aria-label="粘贴"><svg viewBox="0 0 24 24"><use href="#paste"/></svg></button>
  <button disabled aria-label="撤销"><svg viewBox="0 0 24 24"><use href="#undo"/></svg></button>
  <button disabled aria-label="重做"><svg viewBox="0 0 24 24"><use href="#redo"/></svg></button>
  <i class="grip"></i>
  <button disabled aria-label="标注"><svg viewBox="0 0 24 24"><use href="#tag"/></svg></button>
  <button disabled aria-label="图表"><svg viewBox="0 0 24 24"><use href="#diag"/></svg></button>
  <i class="sep"></i>
  <button aria-label="高亮固定标注"><svg viewBox="0 0 24 24"><use href="#tagb"/></svg></button>
  <button aria-label="显示未放置标注"><svg viewBox="0 0 24 24"><use href="#tagr"/></svg></button>
  <i class="sep"></i>
  <button disabled aria-label="固定标注"><svg viewBox="0 0 24 24"><use href="#tag"/><use href="#pin"/></svg></button>
  <button disabled aria-label="显示标注"><svg viewBox="0 0 24 24"><use href="#tag"/><use href="#eye"/></svg></button>
  <button disabled aria-label="移动标注"><svg viewBox="0 0 24 24"><use href="#tag"/><use href="#bsq"/></svg></button>
  <button disabled aria-label="旋转标注"><svg viewBox="0 0 24 24"><use href="#tag"/><use href="#bsq"/></svg></button>
  <button class="more" aria-label="更多">»</button>
  <i class="grip"></i>
  <button aria-label="数据库管理器"><svg viewBox="0 0 24 24"><use href="#db"/></svg></button>
  <i class="grip"></i>
  <button aria-label="地形"><svg viewBox="0 0 24 24"><use href="#tri"/></svg></button>
  <button aria-label="添加网络服务"><svg viewBox="0 0 24 24"><use href="#globe"/><use href="#plus"/></svg></button>
  <button aria-label="搜索网络服务"><svg viewBox="0 0 24 24"><use href="#globe"/><use href="#gsearch"/></svg></button>
  <button aria-label="元数据搜索"><svg viewBox="0 0 24 24"><use href="#earth"/><use href="#bino"/></svg></button>
  <i class="space"></i><i class="grip"></i>
  <button aria-label="帮助内容"><svg viewBox="0 0 24 24"><use href="#help"/></svg></button>
  <i class="space"></i><i class="grip"></i>
  <button aria-label="Python 控制台"><svg viewBox="0 0 24 24"><use href="#pyc"/></svg></button>
  <button aria-label="地形插件"><svg viewBox="0 0 24 24"><use href="#terrain"/></svg></button>
  <button aria-label="瓦片插件"><svg viewBox="0 0 24 24"><use href="#tiles"/></svg></button>
  <button aria-label="地球插件"><svg viewBox="0 0 24 24"><use href="#space"/></svg></button>
</div>

<div class="toolbar" role="toolbar" aria-label="添加图层">
  <i class="grip"></i>
  <button aria-label="添加矢量图层"><svg viewBox="0 0 24 24"><use href="#vec"/><use href="#plus"/></svg></button>
  <button aria-label="添加栅格图层"><svg viewBox="0 0 24 24"><use href="#raster"/><use href="#plus"/></svg></button>
  <button aria-label="添加网孔图层"><svg viewBox="0 0 24 24"><use href="#mesh"/><use href="#plus"/></svg></button>
  <button aria-label="添加分隔文本图层"><svg viewBox="0 0 24 24"><use href="#comma"/><use href="#plus"/></svg></button>
  <button aria-label="添加 SpatiaLite 图层"><svg viewBox="0 0 24 24"><use href="#feather"/><use href="#plus"/></svg></button>
  <button aria-label="添加虚拟图层"><svg viewBox="0 0 24 24"><use href="#vtile"/><use href="#plus"/></svg></button>
  <button class="drop" aria-label="添加 PostGIS 图层"><svg viewBox="0 0 24 24"><use href="#pg"/><use href="#plus"/></svg></button>
  <button aria-label="添加 WMS 图层"><svg viewBox="0 0 24 24"><use href="#earth"/><use href="#plus"/></svg></button>
  <button aria-label="添加 WCS 图层"><svg viewBox="0 0 24 24"><use href="#dglobe"/><use href="#plus"/></svg></button>
  <button aria-label="添加 WFS 图层"><svg viewBox="0 0 24 24"><use href="#wfs"/><use href="#plus"/></svg></button>
  <button class="drop" aria-label="新建矢量图层"><svg viewBox="0 0 24 24"><use href="#vec"/><use href="#star"/></svg></button>
  <i class="grip"></i>
  <button disabled aria-label="局部累计拉伸"><svg viewBox="0 0 24 24"><use href="#hist"/></svg></button>
  <button disabled aria-label="全局累计拉伸"><svg viewBox="0 0 24 24"><use href="#histw"/></svg></button>
  <button disabled aria-label="局部直方图拉伸"><svg viewBox="0 0 24 24"><use href="#hist"/></svg></button>
  <button disabled aria-label="全局直方图拉伸"><svg viewBox="0 0 24 24"><use href="#histw"/></svg></button>
  <button disabled aria-label="增加亮度"><svg viewBox="0 0 24 24"><use href="#sun"/><use href="#bup"/></svg></button>
  <button disabled aria-label="降低亮度"><svg viewBox="0 0 24 24"><use href="#sun"/><use href="#bdn"/></svg></button>
  <button disabled aria-label="增加对比度"><svg viewBox="0 0 24 24"><use href="#contr"/><use href="#bup"/></svg></button>
  <button disabled aria-label="降低对比度"><svg viewBox="0 0 24 24"><use href="#contr"/><use href="#bdn"/></svg></button>
  <button disabled aria-label="增加伽马"><svg viewBox="0 0 24 24"><use href="#gam"/><use href="#bup"/></svg></button>
  <button disabled aria-label="降低伽马"><svg viewBox="0 0 24 24"><use href="#gam"/><use href="#bdn"/></svg></button>
  <i class="grip"></i>
</div>
<div class="toolbar thin"><i class="grip"></i></div>

<main class="work">
  <section class="dock layers">
    <header class="dock-head"><h2>图层</h2><button aria-label="浮动"><svg viewBox="0 0 24 24"><use href="#float"/></svg></button><button aria-label="关闭"><svg viewBox="0 0 24 24"><use href="#shut"/></svg></button></header>
    <div class="minibar">
      <button aria-label="样式"><svg viewBox="0 0 24 24"><use href="#brush"/></svg></button>
      <button aria-label="添加组"><svg viewBox="0 0 24 24"><use href="#group"/></svg></button>
      <button aria-label="可见性"><svg viewBox="0 0 24 24"><use href="#eye2"/></svg></button>
      <button aria-label="过滤"><svg viewBox="0 0 24 24"><use href="#funnel"/><use href="#caret"/></svg></button>
      <button class="more" aria-label="更多">»</button>
    </div>
    <div class="layer-tree"></div>
  </section>
  <div class="split"><i></i></div>
  <section class="canvas" aria-label="地图画布">
    <svg viewBox="158 175 1289 823" preserveAspectRatio="none"><path d="M516 870L1404 456L1400 448L1436 446L1411 471L1408 464L516 871z" fill="#fb5156"/></svg>
  </section>
  <div class="split"><i></i></div>
  <section class="dock side">
    <header class="dock-head"><h2>工具箱</h2><button aria-label="浮动"><svg viewBox="0 0 24 24"><use href="#float"/></svg></button><button aria-label="关闭"><svg viewBox="0 0 24 24"><use href="#shut"/></svg></button></header>
    <div class="minibar">
      <button aria-label="模型"><svg viewBox="0 0 24 24"><use href="#cogs"/><use href="#caret"/></svg></button>
      <button aria-label="脚本"><svg viewBox="0 0 24 24"><use href="#py"/><use href="#caret"/></svg></button>
      <button aria-label="历史"><svg viewBox="0 0 24 24"><use href="#clock"/></svg></button>
      <button aria-label="结果"><svg viewBox="0 0 24 24"><use href="#doc"/></svg></button>
      <i class="sep"></i>
      <button disabled aria-label="就地编辑"><svg viewBox="0 0 24 24"><use href="#edit"/></svg></button>
      <i class="sep"></i>
      <button aria-label="选项"><svg viewBox="0 0 24 24"><use href="#wrench"/></svg></button>
    </div>
    <label class="searchbox"><svg viewBox="0 0 24 24"><use href="#search"/></svg><input type="text" placeholder="搜索..." aria-label="搜索算法"></label>
    <div class="view tools">
      <ul class="tree">
        <li><i class="arr"></i><svg viewBox="0 0 24 24"><use href="#q"/></svg>矢量属性表</li>
        <li><i class="arr"></i><svg viewBox="0 0 24 24"><use href="#q"/></svg>矢量通用</li>
        <li><i class="arr"></i><svg viewBox="0 0 24 24"><use href="#q"/></svg>矢量选择集</li>
        <li><i class="arr"></i><svg viewBox="0 0 24 24"><use href="#q"/></svg>矢量Coverage</li>
        <li><i class="arr"></i><svg viewBox="0 0 24 24"><use href="#q"/></svg>图表</li>
        <li><i class="arr"></i><svg viewBox="0 0 24 24"><use href="#q"/></svg>图层工具</li>
        <li><i class="arr"></i><svg viewBox="0 0 24 24"><use href="#q"/></svg>网孔</li>
        <li><i class="arr"></i><svg viewBox="0 0 24 24"><use href="#q"/></svg>网络分析</li>
        <li><i class="none"></i><svg viewBox="0 0 24 24"><use href="#q"/></svg></li>
      </ul>
      <div class="scroll"></div>
    </div>
    <p class="notice"><span>你可以添加更多算法到工具箱中，<a href="#providers">启用附加提供程序</a>。</span><a href="#close">[关闭]</a></p>
    <div class="hsplit"><i></i></div>
    <header class="dock-head"><h2>浏览器</h2><button aria-label="浮动"><svg viewBox="0 0 24 24"><use href="#float"/></svg></button><button aria-label="关闭"><svg viewBox="0 0 24 24"><use href="#shut"/></svg></button></header>
    <div class="minibar">
      <button aria-label="添加所选图层"><svg viewBox="0 0 24 24"><use href="#addl"/></svg></button>
      <button aria-label="刷新"><svg viewBox="0 0 24 24"><use href="#refresh"/></svg></button>
      <button aria-label="过滤"><svg viewBox="0 0 24 24"><use href="#funnel"/></svg></button>
      <button aria-label="全部折叠"><svg viewBox="0 0 24 24"><use href="#collapse"/></svg></button>
      <button aria-label="属性"><svg viewBox="0 0 24 24"><use href="#info"/></svg></button>
    </div>
    <div class="view browser">
      <ul class="tree">
        <li><i class="arr"></i><svg viewBox="0 0 24 24"><use href="#home"/></svg>主目录</li>
        <li><i class="arr"></i><svg viewBox="0 0 24 24"><use href="#folder"/></svg>C:\</li>
        <li><i class="arr"></i><svg viewBox="0 0 24 24"><use href="#folder"/></svg>D:\ (新加卷)</li>
        <li><i class="arr"></i><svg viewBox="0 0 24 24"><use href="#folder"/></svg>Z:\ (staticData)</li>
        <li><i class="none"></i><svg viewBox="0 0 24 24"><use href="#pkg"/></svg>GeoPackage</li>
        <li><i class="none"></i><svg viewBox="0 0 24 24"><use href="#feather"/></svg>SpatiaLite</li>
        <li><i class="none"></i><svg viewBox="0 0 24 24"><use href="#pg"/></svg>PostgreSQL</li>
        <li><i class="none"></i><svg viewBox="0 0 24 24"><use href="#hana"/></svg>SAP HANA</li>
        <li><i class="none"></i><svg viewBox="0 0 24 24"><use href="#stac"/></svg>STAC</li>
        <li><i class="none"></i><svg viewBox="0 0 24 24"><use href="#mssql"/></svg>MS SQL Server</li>
        <li><i class="none"></i><svg viewBox="0 0 24 24"><use href="#oracle"/></svg>Oracle</li>
        <li><i class="none"></i><svg viewBox="0 0 24 24"><use href="#earth"/></svg>WMS/WMTS</li>
        <li><i class="none"></i><svg viewBox="0 0 24 24"><use href="#cube"/></svg>场景</li>
        <li><i class="none"></i><svg viewBox="0 0 24 24"><use href="#sensor"/></svg>传感器物体</li>
        <li><i class="none"></i><svg viewBox="0 0 24 24"><use href="#vgrid"/></svg>矢量切片</li>
        <li><i class="none"></i><svg viewBox="0 0 24 24"><use href="#cloud"/></svg>云</li>
        <li class="selected"><i class="none"></i><svg viewBox="0 0 24 24"><use href="#xyz"/></svg>XYZ切片
          <div class="menu" role="menu"><button role="menuitem" class="hot">新建连接...</button><button role="menuitem">保存连接...</button><button role="menuitem">加载连接...</button></div>
          <i class="mark row-mark"></i><i class="mark menu-mark"></i>
        </li>
        <li class="child"><svg viewBox="0 0 24 24"><use href="#xyz"/></svg>Google Maps</li>
        <li class="child"><svg viewBox="0 0 24 24"><use href="#xyz"/></svg>OpenStreetMap</li>
        <li class="child"><svg viewBox="0 0 24 24"><use href="#xyz"/></svg>天地图影像</li>
        <li class="child"><svg viewBox="0 0 24 24"><use href="#xyz"/></svg>天地图影像注记</li>
        <li class="child"><svg viewBox="0 0 24 24"><use href="#xyz"/></svg>高德卫星</li>
        <li class="child"><svg viewBox="0 0 24 24"><use href="#xyz"/></svg>高德地图</li>
        <li class="child"><svg viewBox="0 0 24 24"><use href="#xyz"/></svg>高德路网</li>
        <li><i class="none"></i><svg viewBox="0 0 24 24"><use href="#dglobe"/></svg>WCS</li>
        <li><i class="none"></i><svg viewBox="0 0 24 24"><use href="#wfs"/></svg>WFS / OGC API - 要素</li>
        <li><i class="none"></i><svg viewBox="0 0 24 24"><use href="#earth"/></svg>ArcGIS REST 服务器</li>
      </ul>
      <div class="scroll"></div>
    </div>
  </section>
</main>

<footer class="status">
  <label class="searchbox locator"><svg viewBox="0 0 24 24"><use href="#search"/></svg><input type="text" placeholder="搜索 (Ctrl+K)" aria-label="搜索"></label>
  <label class="field">坐标<input class="coord" type="text" value="30.5252° , 104.0892°"></label>
  <svg class="i18" viewBox="0 0 24 24"><use href="#mouse"/></svg>
  <label class="field scale">比例<span class="combo"><select><option>1:55482</option></select><i></i></span></label>
  <svg class="i16 lock" viewBox="0 0 24 24"><use href="#lock"/></svg>
  <label class="field">放大镜<span class="spin"><input type="text" value="100%"><i></i></span></label>
  <label class="field angle">旋转角度<span class="spin"><input type="text" value="0.0°"><i></i></span></label>
  <label class="field render"><input type="checkbox" checked>渲染</label>
  <button class="crs"><svg class="i16" viewBox="0 0 24 24"><use href="#crs"/></svg>EPSG:4326</button>
  <button class="msgs" aria-label="消息"><svg class="i16" viewBox="0 0 24 24"><use href="#msg"/></svg></button>
</footer>
<div class="desk"></div>
</div>
</body>
</html>
```
FILE: styles.css
```css
* { box-sizing: border-box; }
html, body { height: 100%; margin: 0; }
body {
  background: #efefef;
  color: #111;
  font: 12px/19px "Noto Sans", "Noto Sans CJK SC", sans-serif;
  font-kerning: none;
  overflow: hidden;
}
button, input, select { font: inherit; color: inherit; }
button { background: none; border: 0; padding: 0; margin: 0; }
h1, h2, p, ul { margin: 0; padding: 0; font-size: 12px; font-weight: 400; }
ul { list-style: none; }
svg { display: block; flex: none; }
.defs { position: absolute; width: 0; height: 0; }
.app { display: flex; flex-direction: column; height: 100vh; }

.titlebar { display: flex; align-items: center; height: 18px; padding-bottom: 4px; background: #eef3f8; flex: none; }
.titlebar h1 { flex: 1; padding-left: 6px; line-height: 14px; }
.i14 { width: 14px; height: 14px; }
.i16 { width: 16px; height: 16px; }
.i18 { width: 18px; height: 18px; margin: 0 13px 0 2px; }
.titlebar button { width: 45px; display: flex; justify-content: center; }
.titlebar button svg { width: 12px; height: 12px; }
.titlebar button:last-child { width: 31px; margin-left: 8px; }

.menubar { display: flex; gap: 15px; height: 22px; padding-left: 7px; border-bottom: 1px solid #d4d4d4; background: linear-gradient(#eef2f6, #f0f0f0); flex: none; }
.menubar button { line-height: 21px; white-space: nowrap; }
.menubar u { text-underline-offset: 2px; }

.toolbar { display: flex; align-items: center; gap: 2px; height: 39px; border-bottom: 1px solid #b4b4b4; background: linear-gradient(#fbfbfb, #efefef); flex: none; overflow: hidden; }
.toolbar.thin { height: 16px; background: #f3f3f3; }
.toolbar button { display: flex; align-items: center; justify-content: center; width: 31px; height: 31px; border: 1px solid transparent; border-radius: 3px; flex: none; }
.toolbar button svg { width: 24px; height: 24px; }
.toolbar button.on { background: #dadada; border-color: #a6a6a6; }
.toolbar button.drop { width: 43px; gap: 5px; padding-left: 2px; }
.drop::after { content: ""; border: 4px solid transparent; border-top-color: #444; border-bottom: 0; }
button:disabled svg { filter: grayscale(1); opacity: .32; }
.drop:disabled::after { opacity: .5; }
.toolbar button.more, .minibar button.more { width: 12px; font-size: 16px; line-height: 16px; padding-bottom: 3px; color: #333; }
.grip { flex: none; width: 15px; height: 18px; padding-left: 6px; }
.grip::before { content: ""; display: block; width: 5px; height: 18px; background: radial-gradient(circle at 1px 1px, #c4c4c4 0 1px, transparent 1px) 0 0 / 4px 3px; }
.toolbar > .grip:first-child { width: 7px; padding-left: 1px; }
.toolbar.thin .grip, .toolbar.thin .grip::before { height: 14px; }
.sep { flex: none; width: 5px; height: 20px; border-left: 1px solid #ccc; margin-left: 2px; margin-right: -3px; }
.space { flex: none; width: 25px; }

.work { flex: 1; display: flex; min-height: 0; padding-top: 1px; }
.dock { display: flex; flex-direction: column; min-height: 0; }
.layers { width: 151px; flex: none; }
.side { width: 454px; flex: none; overflow: hidden; }
.dock-head { display: flex; align-items: center; height: 21px; padding-bottom: 2px; flex: none; }
.dock-head h2 { flex: 1; }
.dock-head button { margin-right: 3px; }
.dock-head svg { width: 11px; height: 11px; }
.side .dock-head { padding-left: 4px; }
.side .dock-head button:last-child { margin-right: -9px; }
.layers .dock-head button:last-child { margin-right: 2px; }
.minibar { display: flex; align-items: center; gap: 9px; height: 29px; padding: 0 0 3px 4px; flex: none; }
.side .minibar { padding-left: 8px; }
.minibar svg { width: 16px; height: 16px; }
.minibar .sep { width: 1px; height: 12px; margin: 0 -1px; }
.minibar button.more { margin-left: auto; margin-right: 3px; }
.layer-tree { flex: 1; background: #fff; border: 1px solid #b4b4b4; border-left: 0; }
.split { flex: none; width: 6px; display: flex; align-items: center; justify-content: center; }
.split i { width: 2px; height: 18px; background: repeating-linear-gradient(#bbb 0 1px, transparent 1px 3px); }
.canvas { flex: 1; min-width: 0; background: #fff; border: 1px solid #b0b0b0; }
.canvas svg { width: 100%; height: 100%; }

.searchbox { display: flex; align-items: center; height: 22px; background: #fff; border: 1px solid #ababab; border-radius: 3px; padding-left: 8px; gap: 7px; flex: none; }
.searchbox svg { width: 13px; height: 13px; }
.searchbox input { border: 0; outline: 0; padding: 0; flex: 1; min-width: 0; background: none; line-height: 18px; }
.searchbox input::placeholder { color: #808080; opacity: 1; }
.side .searchbox { border-radius: 3px 0 0 3px; border-right: 0; }

.view { display: flex; min-height: 0; background: #fff; border: 1px solid #b0b0b0; border-right: 0; }
.tools { flex: 159 1 0; }
.tools .tree { overflow: hidden; }
.browser { flex: 522 1 0; }
.tree { flex: 1; min-width: 0; }
.tree li { display: flex; align-items: center; height: 19px; padding-left: 8px; white-space: nowrap; }
.tree svg { width: 16px; height: 16px; margin-right: 6px; }
.browser .arr, .browser .none { margin-right: 8px; }
.browser .tree li { padding-left: 6px; }
.tools .tree svg { width: 14px; height: 14px; margin: 0 7px 0 3px; }
.arr, .none { flex: none; width: 5px; height: 8px; margin-right: 8px; }
.arr { border: 4px solid transparent; border-left: 5px solid #555; border-right: 0; }
.scroll { flex: none; width: 4px; margin-left: auto; border-left: 1px solid #b8b8b8; background: #f2f2f2; }
.browser .tree li.child { padding-left: 36px; }
.browser .tree .child svg { width: 14px; height: 14px; margin-right: 7px; }
.browser .tree .selected > svg { height: 14px; }
.browser .tree li.selected { position: relative; z-index: 2; width: 170px; background: #0f7fd8; color: #fff; }

.menu { position: absolute; left: 152px; top: 5px; width: 120px; display: flex; flex-direction: column; background: #fff; border: 1px solid #a0a0a0; box-shadow: 2px 2px 2px rgba(0, 0, 0, .45); color: #111; }
.menu button { height: 25px; padding-left: 27px; text-align: left; }
.menu .hot { background: #0078d7; color: #fff; }
.mark { position: absolute; border: 6px solid #fb5156; border-radius: 3px; }
.row-mark { left: 6px; top: -6px; width: 171px; height: 31px; }
.menu-mark { left: 171px; top: -2px; width: 113px; height: 37px; border-width: 5px; }

.notice { display: flex; gap: 40px; height: 17px; padding-left: 3px; border: 1px solid #2a6fc4; border-right: 0; background: #5aaaff; color: #fff; line-height: 13px; flex: none; white-space: nowrap; }
.notice a { color: #0000e8; }
.hsplit { height: 5px; flex: none; display: flex; justify-content: center; align-items: center; }
.hsplit i { width: 18px; height: 2px; background: repeating-linear-gradient(90deg, #bbb 0 1px, transparent 1px 3px); }

.status { display: flex; align-items: center; height: 28px; overflow: hidden; flex: none; font-size: 11px; font-family: "Liberation Mono", "Noto Sans CJK SC", monospace; }
.locator { width: 200px; margin-right: auto; }
.locator input { font-family: "Liberation Serif", "Noto Sans CJK SC", serif; font-size: 12px; }
.field { display: flex; align-items: center; gap: 3px; white-space: nowrap; }
.field input[type=text], .field select { height: 22px; border: 1px solid #ababab; border-radius: 3px; background: #fff; padding: 0 0 0 4px; font-size: 10px; margin: 0; outline: 0; }
.field input.coord { width: 134px; }
.combo, .spin { position: relative; display: flex; }
.combo select { appearance: none; width: 83px; }
.combo i { position: absolute; right: 0; top: 0; width: 21px; height: 22px; border-left: 1px solid #ababab; display: grid; place-items: center; }
.combo i::before { content: ""; border: 4px solid transparent; border-top-color: #444; border-bottom: 0; }
.lock { margin: 0 7px 0 10px; }
.spin input { width: 89px; }
.spin i { position: absolute; right: 0; top: 0; width: 15px; height: 22px; border-left: 1px solid #ababab; display: grid; align-content: center; justify-content: center; gap: 4px; }
.spin i::before, .spin i::after { content: ""; border: 4px solid transparent; }
.spin i::before { border-bottom-color: #444; border-top: 0; }
.spin i::after { border-top-color: #444; border-bottom: 0; }
.angle { gap: 9px; margin: 0 6px 0 9px; }
.render { gap: 5px; }
.render input { appearance: none; width: 14px; height: 14px; margin: 0; border: 1px solid #999; background: #fff; display: grid; place-items: center; }
.render input:checked::before { content: ""; width: 5px; height: 9px; margin-bottom: 2px; border: solid #111; border-width: 0 2px 2px 0; transform: rotate(40deg); }
.crs { display: flex; align-items: center; gap: 2px; margin-left: 15px; font-size: 10px; }
.msgs { margin: 0 -4px 0 29px; }
.desk { height: 3px; background: #1b2a3e; flex: none; }
```
